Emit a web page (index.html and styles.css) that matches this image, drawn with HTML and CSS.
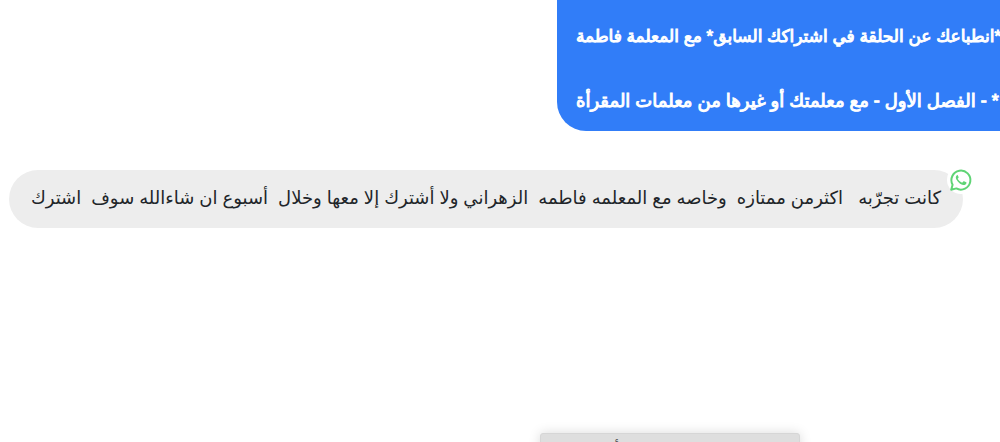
FILE: index.html
```html
<!DOCTYPE html>
<html lang="ar">
<head>
<meta charset="utf-8">
<title>محادثة</title>
<link rel="stylesheet" href="styles.css">
</head>
<body>
<main class="chat">
  <section class="row row-sent">
    <div class="bubble sent" dir="rtl">
      <p class="heading">*انطباعك عن الحلقة في اشتراكك السابق* مع المعلمة فاطمة</p>
      <p>* - الفصل الأول - مع معلمتك أو غيرها من معلمات المقرأة</p>
    </div>
  </section>
  <section class="row row-received">
    <div class="bubble received" dir="rtl">
      <p>كانت تجرّبه &nbsp; اكثرمن ممتازه &nbsp;وخاصه مع المعلمه فاطمه &nbsp;الزهراني ولا أشترك إلا معها وخلال &nbsp;أسبوع ان شاءالله سوف &nbsp;اشترك</p>
      <svg class="badge" viewBox="0 0 28 28" role="img" aria-label="WhatsApp">
        <circle cx="14" cy="14" r="14" fill="#fff"/>
        <path d="M4.2 23.8 5.600 18.700A9.500 9.500 0 1 1 9.300 22.400Z" fill="#fff" stroke="#5fd475" stroke-width="2" stroke-linejoin="round"/>
        <path d="M10.8 8.8c-.4 0-.9.2-1.2.6-.5.6-.9 1.3-.8 2.2.1 1.3.9 2.5 1.8 3.6 1.5 1.9 3.3 3.2 5.6 3.8 1.3.3 2.9-.5 3.2-1.7.1-.5.1-.9-.1-1l-2.3-1.1c-.3-.1-.5-.1-.7.2l-.9 1.1c-.2.2-.4.2-.7.1-1.800-.8-3-1.900-3.900-3.500-.2-.3-.1-.5.1-.7.400-.4.900-1 .7-1.500l-1-2c-.1-.2-.3-.1-.6-.1Z" fill="#5fd475"/>
      </svg>
    </div>
  </section>
  <div class="toast" role="status" dir="rtl">أ</div>
</main>
</body>
</html>
```
FILE: styles.css
```css
* {
  box-sizing: border-box;
}

body {
  margin: 0;
  background: #fff;
  font-family: "Liberation Sans", "DejaVu Sans", sans-serif;
  overflow: hidden;
}

.chat {
  height: 100vh;
  display: flex;
  flex-direction: column;
}

.row {
  display: flex;
}

.row-sent {
  padding-left: 557px;
}

.row-received {
  padding: 39px 37px 0 9px;
}

.bubble {
  position: relative;
  flex: none;
  padding: 12px 19px 13px;
  border-radius: 29px;
  font-size: 18px;
  line-height: 33px;
  white-space: nowrap;
}

.bubble p {
  margin: 0;
}

.sent {
  display: grid;
  gap: 32px;
  min-width: 100%;
  padding-top: 20px;
  padding-right: 0;
  border-radius: 0 0 0 29px;
  background: #317df8;
  color: #fff;
  text-align: left;
  -webkit-text-stroke: 1px #fff;
}

.heading {
  font-size: 17px;
}

.received {
  min-width: 100%;
  background: #ededed;
  color: #212529;
  text-align: center;
}

.badge {
  position: absolute;
  top: -4px;
  right: -12px;
  width: 28px;
  height: 28px;
}

.toast {
  width: 260px;
  height: 42px;
  flex: none;
  margin: auto 0 -33px 54%;
  padding: 4px 180px 0 0;
  border: 1px solid #d6d6d6;
  border-radius: 3px;
  background: #dedede;
  box-shadow: 0 0 12px #00000026;
  color: #555;
  font-size: 16px;
  line-height: 24px;
}
```
